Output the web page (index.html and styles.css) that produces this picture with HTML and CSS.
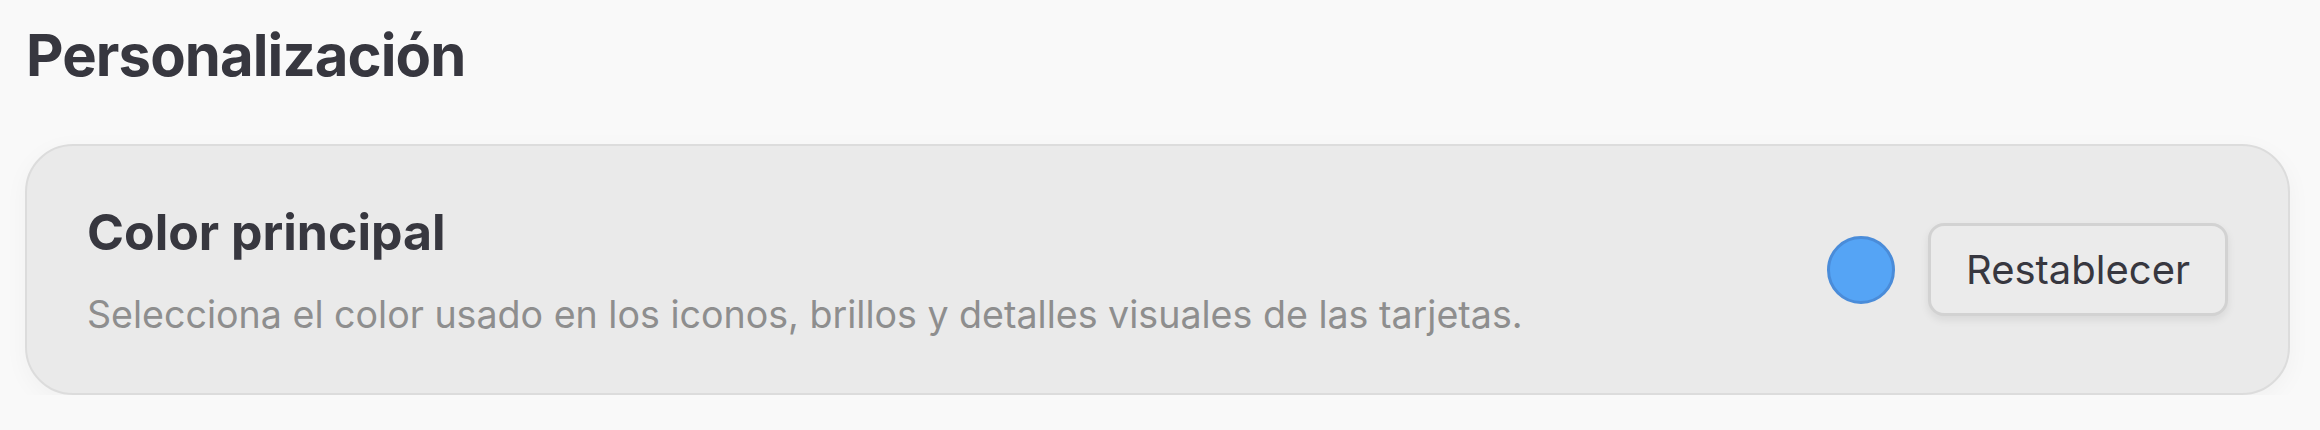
FILE: index.html
```html
<!DOCTYPE html>
<html lang="es">
<head>
<meta charset="utf-8">
<title>Personalización</title>
<link rel="stylesheet" href="styles.css">
</head>
<body>
<main class="page">
  <h1 class="page-title">Personalización</h1>
  <section class="card">
    <div class="card-text">
      <h2 class="card-title">Color principal</h2>
      <p class="card-desc">Selecciona el color usado en los iconos, brillos y detalles visuales de las tarjetas.</p>
    </div>
    <div class="card-actions">
      <span class="swatch"></span>
      <button class="btn" type="button">Restablecer</button>
    </div>
  </section>
</main>
</body>
</html>
```
FILE: styles.css
```css
html, body {
  margin: 0;
  padding: 0;
}
body {
  background: #f9f9f9;
  font-family: Inter, "Noto Sans", sans-serif;
  color: #37373f;
}
.page {
  padding: 20px 30px 0 25px;
}
.page-title {
  margin: 0 0 0 1px;
  font-size: 58px;
  line-height: 70px;
  font-weight: 700;
  letter-spacing: -0.9px;
  color: #37373f;
}
.card {
  margin-top: 54px;
  box-sizing: border-box;
  height: 251px;
  display: flex;
  align-items: center;
  justify-content: space-between;
  padding: 0 60px 0 60px;
  background: #eaeaea;
  border: 2px solid #dcdcdc;
  border-radius: 48px;
  box-shadow: 0 6px 24px rgba(0,0,0,0.04);
}
.card-text {
  display: flex;
  flex-direction: column;
  gap: 30px;
}
.card-title {
  margin: 0;
  font-size: 50px;
  line-height: 60px;
  font-weight: 700;
  color: #37373f;
}
.card-desc {
  margin: 0;
  font-size: 37.6px;
  line-height: 46px;
  color: #8e8e8e;
}
.card-actions {
  display: flex;
  align-items: center;
  gap: 33px;
}
.swatch {
  box-sizing: border-box;
  width: 68px;
  height: 68px;
  border-radius: 50%;
  background: #55a4f5;
  border: 3px solid #4a8cd9;
}
.btn {
  box-sizing: border-box;
  width: 300px;
  height: 93px;
  font-family: Inter, "Noto Sans", sans-serif;
  font-size: 40px;
  color: #37373f;
  background: #ebebeb;
  border: 3px solid #d2d2d2;
  border-radius: 16px;
  box-shadow: 0 4px 8px rgba(0,0,0,0.08);
  padding: 0;
}
```
